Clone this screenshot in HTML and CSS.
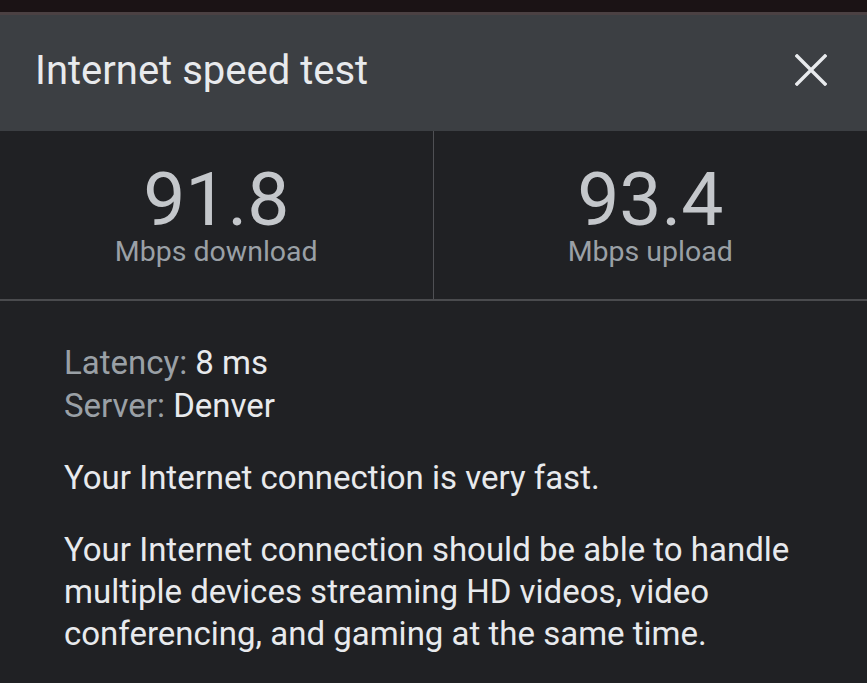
FILE: index.html
```html
<!DOCTYPE html>
<html lang="en">
    <head>
        <title>Internet speed test</title>
        <link rel="stylesheet" href="styles.css">
    </head>

    <body>
        <div class="topStrip"></div>

        <div class="dialogHeader">
            <h1>Internet speed test</h1>
            <svg class="closeIcon" width="32" height="32" viewBox="0 0 32 32">
                <path d="M2 2 L30 30 M30 2 L2 30" stroke="#e8eaed" stroke-width="3.4" stroke-linecap="square" fill="none"/>
            </svg>
        </div>

        <div class="speedStats">
            <div class="stat">
                <div class="statValue">91.8</div>
                <div class="statLabel">Mbps download</div>
            </div>
            <div class="stat">
                <div class="statValue">93.4</div>
                <div class="statLabel">Mbps upload</div>
            </div>
        </div>

        <div class="details">
            <div class="detailLine"><span class="detailName">Latency:</span> 8 ms</div>
            <div class="detailLine"><span class="detailName">Server:</span> Denver</div>

            <p>Your Internet connection is very fast.</p>
            <p>Your Internet connection should be able to handle multiple devices streaming HD videos, video conferencing, and gaming at the same time.</p>
        </div>
    </body>
</html>
```

FILE: styles.css
```css
body {
    margin: 0;
    background-color: #202124;
    font-family: Roboto, "Noto Sans", sans-serif;
    color: #e8eaed;
}

.topStrip {
    height: 12px;
    background-color: #1b1315;
    border-bottom: 3px solid #4b4143;
}

.dialogHeader {
    height: 110px;
    background-color: #3c3f43;
    display: flex;
    align-items: center;
    justify-content: space-between;
    padding: 0 40px 6px 35px;
}

h1 {
    margin: 0;
    font-size: 40px;
    font-weight: 400;
    color: #e8eaed;
}

.closeIcon {
    display: block;
}

.speedStats {
    display: grid;
    grid-template-columns: 1fr 1fr;
    border-bottom: 2px solid #4a4b4e;
}

.stat {
    text-align: center;
    padding: 26px 0 37px 0;
}

.stat:first-child {
    border-right: 1px solid #4f5054;
}

.statValue {
    font-size: 75px;
    line-height: 84px;
    color: #c4c7cb;
}

.statLabel {
    font-size: 28.5px;
    line-height: 20px;
    margin-top: 1px;
    color: #9aa0a6;
}

.details {
    padding: 40px 64px 0 64px;
    font-size: 33px;
}

.detailLine {
    line-height: 43px;
}

.detailName {
    color: #9aa0a6;
}

p {
    margin: 30px 0 0 0;
    line-height: 42px;
}
```
